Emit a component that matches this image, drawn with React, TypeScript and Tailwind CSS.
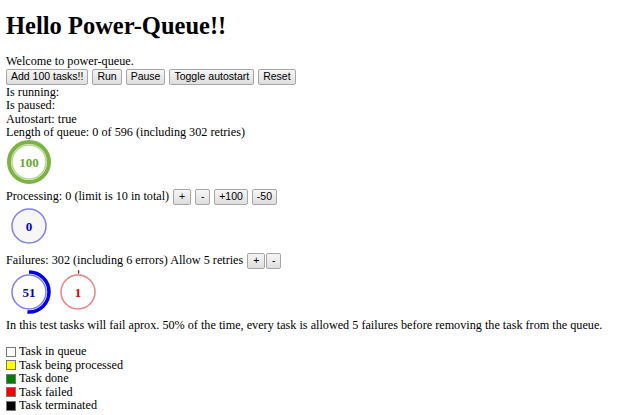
import React from "react"

type GaugeProps = {
  value: number
  percent: number
  ring: string
  arc: string
  text: string
  fill?: string
  arcWidth?: number
}

const Gauge: React.FC<GaugeProps> = ({ value, percent, ring, arc, text, fill = "#ffffff", arcWidth = 3.5 }) => {
  const r = 20
  const c = 2 * Math.PI * r
  const len = (c * percent) / 100
  return (
    <svg width="46" height="46" viewBox="0 0 46 46" className="block overflow-visible">
      <circle cx="23" cy="23" r="17" fill={fill} stroke={ring} strokeWidth="1.5" />
      {percent > 0 && (
        <circle
          cx="23"
          cy="23"
          r={r}
          fill="none"
          stroke={arc}
          strokeWidth={arcWidth}
          strokeDasharray={`${len} ${c}`}
          transform="rotate(-90 23 23)"
        />
      )}
      <text
        x="23"
        y="27.5"
        textAnchor="middle"
        fontFamily="'Liberation Serif', serif"
        fontWeight="bold"
        fontSize="13"
        fill={text}
      >
        {value}
      </text>
    </svg>
  )
}

const Btn: React.FC<{ children: React.ReactNode; className?: string }> = ({ children, className = "" }) => (
  <button
    className={`inline-block h-[16px] rounded-[2px] border border-[#a6a6a6] bg-gradient-to-b from-[#f6f6f6] to-[#dedede] px-[4px] align-middle font-['Liberation_Sans',Arial,sans-serif] text-[10.5px] leading-[13px] text-black ${className}`}
  >
    {children}
  </button>
)

const Legend: React.FC<{ color: string; label: string }> = ({ color, label }) => (
  <div className="flex items-center">
    <span className="mr-[3px] inline-block h-[10px] w-[10px] border border-[#777]" style={{ background: color }} />
    {label}
  </div>
)

const App: React.FC = () => {
  return (
    <div className="min-h-[415px] bg-white px-[6px] font-['Liberation_Serif',serif] text-[12.2px] leading-[13.5px] text-black">
      <h1 className="pb-[15px] pt-[13px] text-[24.5px] font-bold leading-[26px]">Hello Power-Queue!!</h1>
      <div className="mt-[1px]">Welcome to power-queue.</div>
      <div className="flex gap-[4px]">
        <Btn>Add 100 tasks!!</Btn>
        <Btn>Run</Btn>
        <Btn>Pause</Btn>
        <Btn>Toggle autostart</Btn>
        <Btn>Reset</Btn>
      </div>
      <div className="mt-[1px]">Is running:</div>
      <div>Is paused:</div>
      <div>Autostart: true</div>
      <div>Length of queue: 0 of 596 (including 302 retries)</div>
      <div className="mt-[-1px] pb-[4px]">
        <Gauge value={100} percent={100} ring="#b5d98f" arc="#7cb342" text="#6aa533" arcWidth={4} />
      </div>
      <div className="flex items-center gap-[4px]">
        <span>Processing: 0 (limit is 10 in total)</span>
        <Btn className="w-[18px]">+</Btn>
        <Btn className="w-[15px]">-</Btn>
        <Btn>+100</Btn>
        <Btn>-50</Btn>
      </div>
      <div className="mt-[-2px] pb-[4px]">
        <Gauge value={0} percent={0} ring="#8080ee" arc="#0000ee" text="#0000cc" fill="#f6f6f6" />
      </div>
      <div className="flex items-center">
        <span className="mr-[4px]">Failures: 302 (including 6 errors) Allow 5 retries</span>
        <Btn className="w-[18px]">+</Btn>
        <Btn className="ml-[1px] w-[15px]">-</Btn>
      </div>
      <div className="flex gap-[3px] pb-[2px]">
        <Gauge value={51} percent={51} ring="#8080ee" arc="#0000ee" text="#0000aa" />
        <Gauge value={1} percent={1} ring="#f08080" arc="#ee0000" text="#dd0000" />
      </div>
      <div className="mt-[2px]">
        In this test tasks will fail aprox. 50% of the time, every task is allowed 5 failures before removing the task from the queue.
      </div>
      <div className="mt-[13px]">
        <Legend color="#ffffff" label="Task in queue" />
        <Legend color="#ffff00" label="Task being processed" />
        <Legend color="#008000" label="Task done" />
        <Legend color="#ff0000" label="Task failed" />
        <Legend color="#000000" label="Task terminated" />
      </div>
    </div>
  )
}

export default App
